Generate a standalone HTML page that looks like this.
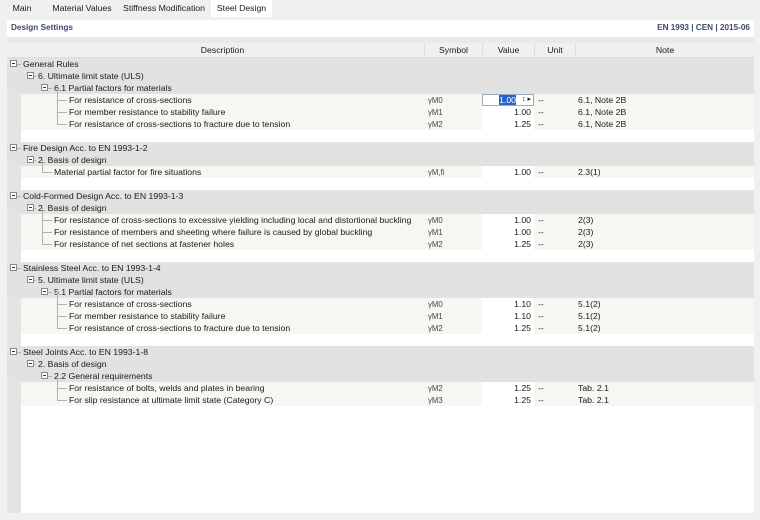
<!DOCTYPE html><html><head><style>
*{margin:0;padding:0;box-sizing:border-box}
body{width:760px;height:520px;background:#f0f0f0;font-family:"Liberation Sans",sans-serif;font-size:8.7px;color:#1a1a1a;position:relative;overflow:hidden}
.tab{position:absolute;top:0;height:17px;line-height:17px;font-size:8.7px}
.panel{position:absolute;left:7px;top:20px;width:747px;height:493px;background:#fff}
.gut{position:absolute;left:7px;top:58px;width:14px;height:455px;background:#e4e4e4}
.r{position:absolute;left:21px;width:733px;height:12px;line-height:12px}
.g{background:#e2e2e2;left:7px;width:747px}
.d{background:#f7f7f1}
.c{position:absolute;top:0;height:12px;white-space:nowrap}
.box{position:absolute;width:7px;height:7px;border:1px solid #888;background:#fff;top:2px}
.box:after{content:"";position:absolute;left:1px;top:2px;width:3px;height:1px;background:#333}
.hl{position:absolute;height:1px;background:#b0b0b0;top:6px}
.vl{position:absolute;width:1px;background:#b0b0b0}
.val{position:absolute;left:461px;width:52px;height:12px;background:#fff;text-align:right;padding-right:3px;top:0}
</style></head><body>
<div class="tab" style="left:0;width:44px;text-align:center">Main</div>
<div class="tab" style="left:44px;width:76px;text-align:center">Material Values</div>
<div class="tab" style="left:118px;width:92px;text-align:center">Stiffness Modification</div>
<div class="tab" style="left:211px;width:61px;text-align:center;background:#fff">Steel Design</div>
<div class="panel"></div>
<div style="position:absolute;left:11px;top:23px;font-weight:bold;color:#3c4a6a;font-size:8.2px">Design Settings</div>
<div style="position:absolute;right:10px;top:23px;font-weight:bold;color:#3c4a6a;font-size:8.2px">EN 1993 | CEN | 2015-06</div>
<div style="position:absolute;left:7px;top:37px;width:747px;height:6px;background:#e9e9e9"></div>
<div style="position:absolute;left:7px;top:43px;width:747px;height:15px;background:#f0f0f0;border-bottom:1px solid #ddd"></div>
<div style="position:absolute;top:43px;height:15px;line-height:15px;left:21px;width:403px;text-align:center">Description</div>
<div style="position:absolute;top:43px;height:15px;line-height:15px;left:424px;width:58px;text-align:center;border-left:1px solid #ddd">Symbol</div>
<div style="position:absolute;top:43px;height:15px;line-height:15px;left:482px;width:52px;text-align:center;border-left:1px solid #ddd">Value</div>
<div style="position:absolute;top:43px;height:15px;line-height:15px;left:534px;width:41px;text-align:center;border-left:1px solid #ddd">Unit</div>
<div style="position:absolute;top:43px;height:15px;line-height:15px;left:575px;width:179px;text-align:center;border-left:1px solid #ddd">Note</div>
<div class="gut"></div>
<div id="t"></div>
<script>
var rows=[
['g',0,'General Rules'],['g',1,'6. Ultimate limit state (ULS)'],['g',2,'6.1 Partial factors for materials'],
['d',3,'For resistance of cross-sections','γM0','1.00','6.1, Note 2B',1],['d',3,'For member resistance to stability failure','γM1','1.00','6.1, Note 2B'],['d',3,'For resistance of cross-sections to fracture due to tension','γM2','1.25','6.1, Note 2B'],['b'],
['g',0,'Fire Design Acc. to EN 1993-1-2'],['g',1,'2. Basis of design'],['d',2,'Material partial factor for fire situations','γM,fi','1.00','2.3(1)'],['b'],
['g',0,'Cold-Formed Design Acc. to EN 1993-1-3'],['g',1,'2. Basis of design'],['d',2,'For resistance of cross-sections to excessive yielding including local and distortional buckling','γM0','1.00','2(3)'],['d',2,'For resistance of members and sheeting where failure is caused by global buckling','γM1','1.00','2(3)'],['d',2,'For resistance of net sections at fastener holes','γM2','1.25','2(3)'],['b'],
['g',0,'Stainless Steel Acc. to EN 1993-1-4'],['g',1,'5. Ultimate limit state (ULS)'],['g',2,'5.1 Partial factors for materials'],['d',3,'For resistance of cross-sections','γM0','1.10','5.1(2)'],['d',3,'For member resistance to stability failure','γM1','1.10','5.1(2)'],['d',3,'For resistance of cross-sections to fracture due to tension','γM2','1.25','5.1(2)'],['b'],
['g',0,'Steel Joints Acc. to EN 1993-1-8'],['g',1,'2. Basis of design'],['g',2,'2.2 General requirements'],['d',3,'For resistance of bolts, welds and plates in bearing','γM2','1.25','Tab. 2.1'],['d',3,'For slip resistance at ultimate limit state (Category C)','γM3','1.25','Tab. 2.1']];
var bx=[10,27,41],tx=[23,38,54,69],h='',y=58;
rows.forEach(function(r){
 if(r[0]=='b'){h+='<div class="r" style="top:'+y+'px;background:#fff"></div>';y+=12;return;}
 var L=r[1];
 if(r[0]=='g'){
  h+='<div class="r g" style="top:'+y+'px">';
  h+='<div class="box" style="left:'+(bx[L]-7)+'px"></div><div class="hl" style="left:'+(bx[L])+'px;width:'+(tx[L]-bx[L]-9)+'px"></div>';
  h+='<div class="c" style="left:'+(tx[L]-7)+'px">'+r[2]+'</div></div>';
 } else {
  h+='<div class="r d" style="top:'+y+'px">';
  h+='<div class="hl" style="left:'+(tx[L]-21-12)+'px;width:10px"></div>';
  h+='<div class="vl" style="left:'+(tx[L]-21-12)+'px;top:-6px;height:12px"></div>';
  h+='<div class="c" style="left:'+(tx[L]-21)+'px">'+r[2]+'</div>';
  h+='<div class="c" style="left:407px;color:#444;font-size:7.8px;top:1px;line-height:12px">'+r[3]+'</div>';
  if(r[6]) h+='<div class="val" style="border:1px solid #9ab;line-height:10px"><span style="background:#2a62c9;color:#fff;margin-right:14px">1.00</span><span style="position:absolute;right:2px;top:0;font-size:7px">↕ ▸</span></div>';
  else h+='<div class="val">'+r[4]+'</div>';
  h+='<div class="c" style="left:517px">--</div>';
  h+='<div class="c" style="left:557px">'+r[5]+'</div></div>';
 }
 y+=12;
});
document.getElementById('t').innerHTML=h;
</script>
</body></html>
